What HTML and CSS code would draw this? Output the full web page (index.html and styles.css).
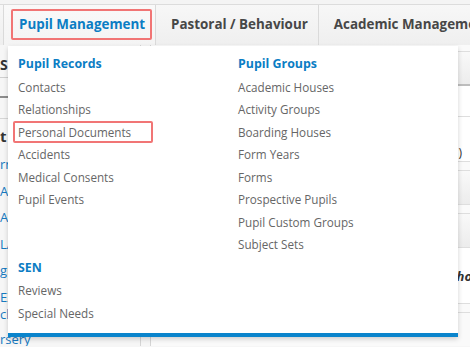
FILE: index.html
```html
<!DOCTYPE html>
<html>
<head>
<meta charset="utf-8">
<link rel="stylesheet" href="styles.css">
</head>
<body>
<div class="page">
  <div class="topstrip"></div>
  <nav class="topnav">
    <div class="tab active"><a class="tablink">Pupil Management</a></div>
    <div class="tab"><a class="tablink">Pastoral / Behaviour</a></div>
    <div class="tab"><a class="tablink">Academic Management</a></div>
  </nav>
  <div class="content">
    <div class="leftpane">
      <div class="lrow l-s">S</div>
      <div class="lrow l-line"></div>
      <div class="lrow l-dark"></div>
      <div class="lrow l-t">t</div>
      <div class="lrow link">rn</div>
      <div class="lrow link">A</div>
      <div class="lrow link">A</div>
      <div class="lrow link">LA</div>
      <div class="lrow link">gi</div>
      <div class="lrow link two">EX<br>ch</div>
      <div class="lrow link last">rsery</div>
    </div>
    <div class="midpane"></div>
    <div class="rightpane">
      <div class="rrow r-gap"></div>
      <div class="rrow r-head"></div>
      <div class="rrow r-white"></div>
      <div class="rrow r-text">(in)</div>
      <div class="rrow r-thin"></div>
      <div class="rrow r-head r-h2"></div>
      <div class="rrow r-thin"></div>
      <div class="rrow r-head r-h2"></div>
      <div class="rrow r-who"><i>Who</i></div>
      <div class="rrow r-thin"></div>
    </div>
  </div>

  <div class="mega">
    <div class="megagrid">
      <section class="group">
        <h3 class="ghead">Pupil Records</h3>
        <a class="item">Contacts</a>
        <a class="item">Relationships</a>
        <a class="item focus">Personal Documents</a>
        <a class="item">Accidents</a>
        <a class="item">Medical Consents</a>
        <a class="item">Pupil Events</a>
      </section>
      <section class="group">
        <h3 class="ghead">Pupil Groups</h3>
        <a class="item">Academic Houses</a>
        <a class="item">Activity Groups</a>
        <a class="item">Boarding Houses</a>
        <a class="item">Form Years</a>
        <a class="item">Forms</a>
        <a class="item">Prospective Pupils</a>
        <a class="item">Pupil Custom Groups</a>
        <a class="item">Subject Sets</a>
      </section>
      <section class="group">
        <h3 class="ghead">SEN</h3>
        <a class="item">Reviews</a>
        <a class="item">Special Needs</a>
      </section>
    </div>
  </div>
</div>
</body>
</html>
```
FILE: styles.css
```css
* { box-sizing: border-box; }
html, body { margin: 0; padding: 0; }
body {
  width: 470px;
  height: 347px;
  overflow: hidden;
  background: #f6f6f6;
  font-family: "Open Sans", "Liberation Sans", sans-serif;
}
.page { position: relative; width: 470px; height: 347px; overflow: hidden; }

.topstrip { height: 5px; background: #f4f4f4; border-bottom: 1px solid #dcdcdc; }

.topnav {
  display: flex;
  height: 40px;
  background: linear-gradient(#f7f7f7, #efefef);
  padding-left: 3px;
  white-space: nowrap;
  overflow: hidden;
}
.tab {
  border-left: 1px solid #dadada;
  padding: 4px 3px 5px 7px;
  flex: none;
}
.tab.active { background: linear-gradient(#f9f9f9, #f4f4f4); }
.tablink {
  display: block;
  border: 2px solid transparent;
  border-radius: 2px;
  padding: 0 5px 0 6px;
  line-height: 27px;
  font-size: 13.4px;
  font-weight: 700;
  color: #474747;
}
.tab.active .tablink { color: #0b7dc4; border-color: #f17575; }

.content { display: flex; height: 301px; }
.leftpane { width: 141px; border-right: 1px solid #d5d5d5; font-size: 12px; overflow: hidden; }
.lrow { padding-left: 0; white-space: nowrap; }
.l-s { height: 33px; line-height: 40px; font-weight: 700; font-size: 14px; color: #333; border-bottom: 1px solid #cfcfcf; }
.l-line { height: 20px; border-bottom: 2px solid #8c8c8c; }
.l-dark { height: 21px; border-bottom: 1px solid #d6d6d6; }
.l-t { height: 32px; line-height: 34px; font-weight: 700; font-size: 15px; color: #333; }
.link { color: #1779c0; height: 26.5px; line-height: 26.5px; font-size: 13px; }
.two { height: 42px; line-height: 17px; padding-top: 5px; }
.last { line-height: 17px; padding-top: 5px; }
.midpane { width: 10px; border-right: 1px solid #d5d5d5; }
.rightpane { flex: 1; background: #fafafa; }
.rrow { white-space: nowrap; text-align: right; font-size: 12px; color: #333; overflow: hidden; }
.r-gap { height: 7px; border-bottom: 1px solid #dedede; }
.r-head { height: 34px; background: linear-gradient(#f9f9f9, #ececec); border-bottom: 2px solid #bdbdbd; }
.r-white { height: 31px; background: #fff; border-bottom: 1px solid #dedede; }
.r-text { height: 45px; padding-top: 27px; padding-right: 8px; background: #fff; border-bottom: 1px solid #dedede; }
.r-thin { height: 9px; border-bottom: 1px solid #dedede; }
.r-h2 { height: 34px; border-bottom: 1px solid #dedede; }
.r-who { height: 56px; padding-top: 19px; font-weight: 700; font-size: 13px; background: #fff; border-bottom: 1px solid #dedede; margin-right: -2px; }

.mega {
  position: absolute;
  left: 8px;
  top: 46px;
  width: 450px;
  height: 291px;
  background: #fff;
  border-bottom: 4px solid #0a84cc;
  box-shadow: 0 2px 5px rgba(0,0,0,0.18);
  padding: 7px 5px 0 5px;
}
.megagrid { display: grid; grid-template-columns: 220px 220px; }
.group { display: flex; flex-direction: column; margin-bottom: 1px; }
.ghead {
  margin: 0;
  padding-left: 5px;
  font-size: 12.4px;
  font-weight: 700;
  color: #0b7dc4;
  line-height: 22.5px;
}
.item {
  display: block;
  width: 140px;
  border: 2px solid transparent;
  border-radius: 2px;
  padding-left: 3px;
  line-height: 18.5px;
  font-size: 11.7px;
  color: #666;
  white-space: nowrap;
}
.item.focus { border-color: #f17575; }
```
